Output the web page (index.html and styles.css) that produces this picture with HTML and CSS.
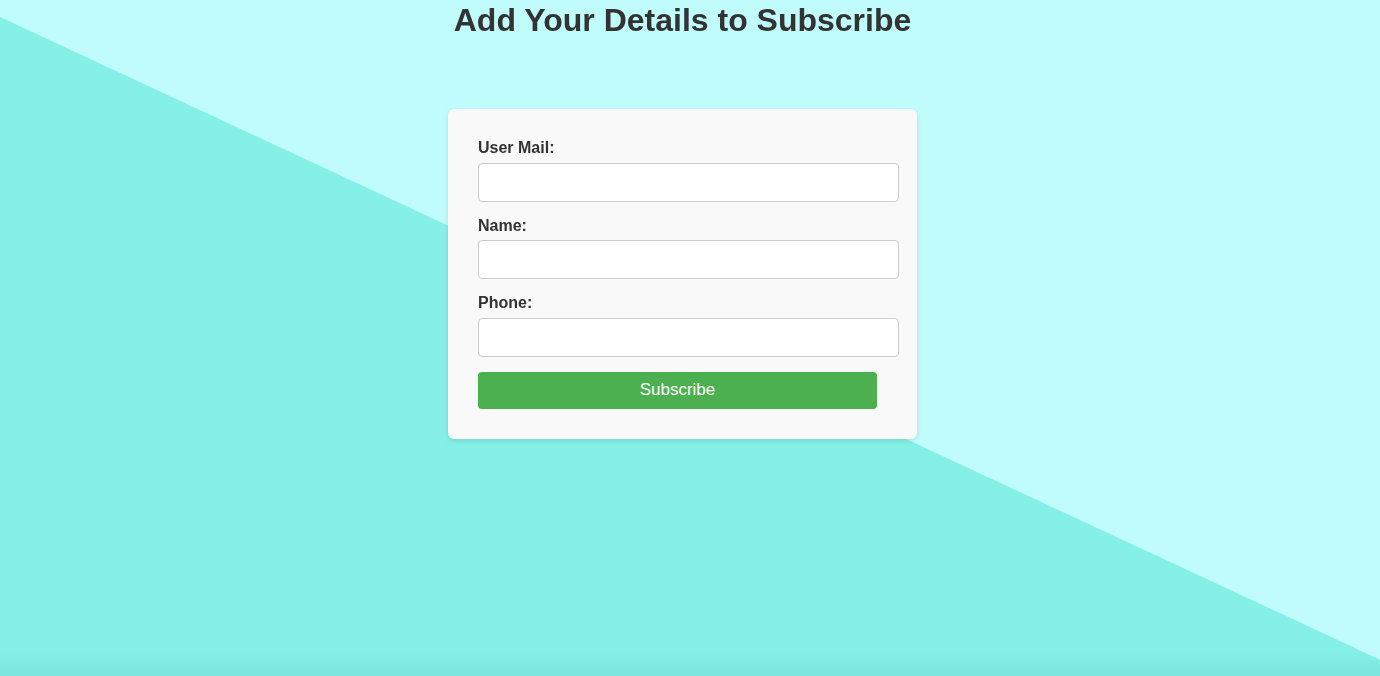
FILE: index.html
```html
<!DOCTYPE html>
<html lang="en">
<head>
<meta charset="utf-8">
<title>Subscribe</title>
<link rel="stylesheet" href="styles.css">
</head>
<body>
<div class="bg" aria-hidden="true"></div>
<main class="page">
  <h1 class="title">Add Your Details to Subscribe</h1>
  <form class="card">
    <div class="field">
      <label class="label" for="mail">User Mail:</label>
      <input class="input" id="mail" type="email">
    </div>
    <div class="field">
      <label class="label" for="name">Name:</label>
      <input class="input" id="name" type="text">
    </div>
    <div class="field">
      <label class="label" for="phone">Phone:</label>
      <input class="input" id="phone" type="tel">
    </div>
    <button class="btn" type="button">Subscribe</button>
  </form>
</main>
</body>
</html>
```
FILE: styles.css
```css
html, body {
  margin: 0;
  padding: 0;
  height: 100%;
}
body {
  background: #c0fcfc;
  font-family: "Liberation Sans", Arial, Helvetica, sans-serif;
  color: #333;
  overflow: hidden;
  position: relative;
}
.bg {
  position: fixed;
  inset: 0;
  background: linear-gradient(to bottom, #84f0e6 0, #84f0e6 96%, #7de6df 100%);
  clip-path: polygon(0 2.5%, 100% 97.6%, 100% 100%, 0 100%);
  z-index: 0;
}
.page {
  position: relative;
  z-index: 1;
  display: flex;
  flex-direction: column;
  align-items: center;
  padding-right: 15px;
}
.title {
  margin: 0;
  padding-top: 2px;
  font-size: 32px;
  line-height: 37px;
  font-weight: bold;
  color: #333;
}
.card {
  margin-top: 70px;
  width: 469px;
  box-sizing: border-box;
  padding: 30px;
  background: #f9f9f9;
  border-radius: 6px;
  box-shadow: 0 2px 5px rgba(0, 0, 0, 0.1);
  display: flex;
  flex-direction: column;
}
.field {
  display: flex;
  flex-direction: column;
  margin-bottom: 15px;
}
.label {
  font-size: 16px;
  font-weight: bold;
  line-height: 18.5px;
  margin-bottom: 5px;
  color: #333;
}
.input {
  width: 421px;
  height: 39px;
  box-sizing: border-box;
  border: 1px solid #ccc;
  border-radius: 4px;
  background: #fff;
  padding: 0 10px;
  margin: 0;
  font-size: 16px;
}
.btn {
  width: 399px;
  height: 37.5px;
  border: none;
  border-radius: 4px;
  background: #4caf50;
  color: #fff;
  font-family: "Liberation Sans", Arial, Helvetica, sans-serif;
  font-size: 17px;
  padding: 0;
  cursor: pointer;
}
```
